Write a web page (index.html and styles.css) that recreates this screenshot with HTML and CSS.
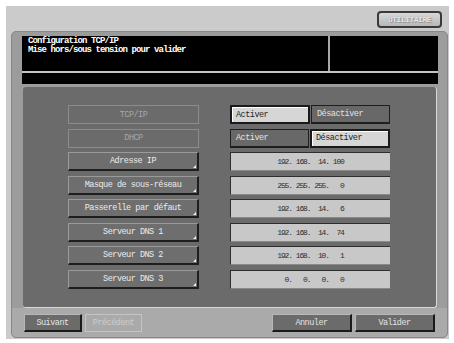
FILE: index.html
```html
<!DOCTYPE html>
<html lang="fr">
<head>
    <meta charset="UTF-8">
    <meta name="viewport" content="width=device-width, initial-scale=1.0">
    <title>Configuration TCP/IP</title>
    <link rel="stylesheet" href="styles.css">
</head>
<body>
    <div class="screen">
        <div class="topbar">
            <button class="util">UTILITAIRE</button>
        </div>
        <div class="frame">
            <div class="top">
                <div class="header">
                    <div class="title">Configuration TCP/IP<br>Mise hors/sous tension pour valider</div>
                    <div class="aside"></div>
                </div>
                <div class="msgbar"></div>
                <div class="panel">
                    <div class="rows">
                        <div class="key off">TCP/IP</div>
                        <div class="pair">
                            <div class="opt on">Activer</div>
                            <div class="opt">Désactiver</div>
                        </div>
                        <div class="key off">DHCP</div>
                        <div class="pair">
                            <div class="opt">Activer</div>
                            <div class="opt on">Désactiver</div>
                        </div>
                        <div class="key">Adresse IP</div>
                        <div class="val">192. 168.  14. 100</div>
                        <div class="key">Masque de sous-réseau</div>
                        <div class="val">255. 255. 255.   0</div>
                        <div class="key">Passerelle par défaut</div>
                        <div class="val">192. 168.  14.   6</div>
                        <div class="key">Serveur DNS 1</div>
                        <div class="val">192. 168.  14.  74</div>
                        <div class="key">Serveur DNS 2</div>
                        <div class="val">192. 168.  10.   1</div>
                        <div class="key">Serveur DNS 3</div>
                        <div class="val">  0.   0.   0.   0</div>
                    </div>
                </div>
            </div>
            <div class="footer">
                <div class="nav">
                    <button class="btn">Suivant</button>
                    <button class="btn off">Précédent</button>
                </div>
                <div class="nav">
                    <button class="btn wide">Annuler</button>
                    <button class="btn wide">Valider</button>
                </div>
            </div>
        </div>
    </div>
</body>
</html>
```

FILE: styles.css
```css
body {
    margin: 0;
    background-color: #fff;
    font-family: "Liberation Mono", "DejaVu Sans Mono", monospace;
}
.screen {
    margin: 6px 0 0 6px;
    width: 443px;
    height: 333px;
    background-color: #cbcbcb;
}
.topbar {
    height: 25px;
    display: flex;
    justify-content: flex-end;
    align-items: flex-start;
}
.util {
    margin: 5px 7px 0 0;
    width: 65px;
    height: 17px;
    padding: 0;
    border: 2px solid #3a3a3a;
    border-radius: 4px;
    background: linear-gradient(#d8d8d8, #b8b8b8);
    color: #e6e6e6;
    font-family: inherit;
    font-size: 8px;
    font-weight: bold;
    letter-spacing: -0.5px;
    text-shadow: 0 0 1px #8a8a8a, 1px 1px 0 #9a9a9a;
}
.frame {
    margin-left: 5px;
    width: 435px;
    height: 305px;
    border: 1px solid #888;
    border-radius: 5px;
    background-color: #9c9c9c;
    display: flex;
    flex-direction: column;
}
.top {
    padding: 4px 9px 0 10px;
}
.header {
    height: 35px;
    display: flex;
    background-color: #000;
}
.title {
    width: 300px;
    padding: 1px 0 0 6px;
    color: #fff;
    font-size: 9px;
    font-weight: bold;
    line-height: 9px;
    letter-spacing: -0.9px;
    border-right: 2px solid #a8a8a8;
}
.aside {
    flex: 1;
}
.msgbar {
    height: 11px;
    margin-top: 2px;
    background-color: #000;
    box-shadow: 0 -2px 0 #c4c4c4;
}
.panel {
    margin: 3px 1px 0 1px;
    height: 221px;
    box-sizing: border-box;
    padding: 18px 0 0 45px;
    background-color: #6b6b6b;
    border-radius: 3px;
    border-right: 1px solid #d8d8d8;
    border-bottom: 1px solid #d8d8d8;
}
.rows {
    display: grid;
    grid-template-columns: 131px 160px;
    grid-auto-rows: 19px;
    column-gap: 31px;
    row-gap: 4.5px;
}
.key {
    position: relative;
    box-sizing: border-box;
    display: flex;
    align-items: center;
    justify-content: center;
    border-top: 1px solid #9a9a9a;
    border-left: 1px solid #9a9a9a;
    border-right: 2px solid #1e1e1e;
    border-bottom: 2px solid #1e1e1e;
    background-color: #6e6e6e;
    color: #ececec;
    font-size: 8.5px;
    letter-spacing: -0.5px;
}
.key::after {
    content: "";
    position: absolute;
    right: 1px;
    bottom: 1px;
    border-left: 3px solid transparent;
    border-bottom: 3px solid #f0f0f0;
}
.key.off {
    border: 1px solid #8c8c8c;
    background-color: #6b6b6b;
    color: #a6a6a6;
}
.key.off::after {
    display: none;
}
.pair {
    display: flex;
    gap: 1px;
}
.opt {
    flex: 1;
    box-sizing: border-box;
    display: flex;
    align-items: center;
    padding-left: 5px;
    border: 1px solid #1e1e1e;
    border-bottom-width: 2px;
    background-color: #686868;
    color: #e2e2e2;
    font-size: 8.5px;
    letter-spacing: -0.5px;
}
.opt.on {
    border: 2px solid #1a1a1a;
    box-shadow: inset 1px 1px 0 #fff;
    background-color: #d6d6d6;
    color: #1e1e1e;
    padding-left: 4px;
}
.val {
    box-sizing: border-box;
    display: flex;
    align-items: center;
    justify-content: center;
    border-top: 1px solid #2e2e2e;
    border-left: 1px solid #2e2e2e;
    border-bottom: 1px solid #8a8a8a;
    background-color: #c8c8c8;
    color: #2e2e2e;
    font-size: 8px;
    letter-spacing: -1.1px;
    white-space: pre;
}
.footer {
    flex: 1;
    display: flex;
    justify-content: space-between;
    align-items: flex-start;
    padding: 6px 12px 0 12px;
    background-color: #aaaaaa;
    border-radius: 0 0 5px 5px;
}
.nav {
    display: flex;
    gap: 3px;
}
.btn {
    width: 58px;
    height: 18px;
    padding: 0;
    border-top: 1px solid #b8b8b8;
    border-left: 1px solid #b8b8b8;
    border-right: 2px solid #1a1a1a;
    border-bottom: 2px solid #1a1a1a;
    background-color: #6b6b6b;
    color: #e4e4e4;
    font-family: inherit;
    font-size: 8.5px;
    letter-spacing: -0.5px;
}
.btn.off {
    width: 57px;
    border: 1px solid #c4c4c4;
    background-color: #aaaaaa;
    color: #cdcdcd;
}
.btn.wide {
    width: 80px;
}
```
